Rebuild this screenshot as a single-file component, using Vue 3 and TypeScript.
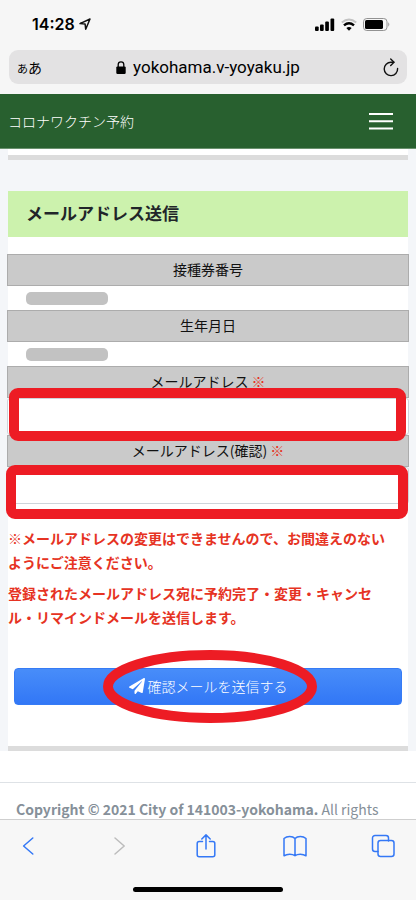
<script setup lang="ts">
import { ref } from 'vue'

const email = ref('')
const emailConfirm = ref('')
const notices: string[] = [
  '※メールアドレスの変更はできませんので、お間違えのないようにご注意ください。',
  '登録されたメールアドレス宛に予約完了・変更・キャンセル・リマインドメールを送信します。',
]
</script>

<template>
  <div class="phone">
    <header class="browser">
      <div class="status">
        <div class="clock">
          <span>14:28</span>
          <svg width="12" height="12" viewBox="0 0 12 12"><path d="M1 5.600 11 1 6.700 11.200 6.100 6Z" fill="none" stroke="#111" stroke-width="1.500" stroke-linejoin="round" /></svg>
        </div>
        <div class="signals">
          <svg width="20" height="13" viewBox="0 0 20 13"><rect x="0" y="8.500" width="3.700" height="4.500" rx="1" /><rect x="5" y="6.500" width="3.700" height="6.500" rx="1" /><rect x="10.200" y="3.500" width="3.700" height="9.500" rx="1" /><rect x="15.500" y="0.500" width="3.700" height="12.500" rx="1" /></svg>
          <svg width="16" height="13" viewBox="0 0 16 13" fill="none"><path d="M.8 4.600Q8-1.600 15.200 4.600" stroke="#c3c3c3" stroke-width="2" /><path d="M3 7.400Q8 3.200 13 7.400" stroke="#000" stroke-width="2.500" /><path d="M5.300 10Q8 7.800 10.700 10L8 12.700Z" fill="#000" /></svg>
          <svg width="28" height="13" viewBox="0 0 28 13"><rect x=".5" y=".5" width="23.500" height="12" rx="3.300" fill="none" stroke="#929292" /><rect x="2" y="2" width="18" height="9" rx="1.600" /><path d="M25.300 4.300q2 2.200 0 4.400z" fill="#929292" /></svg>
        </div>
      </div>
      <div class="address">
        <button class="plain text-size" type="button" aria-label="表示メニュー"><small>あ</small>あ</button>
        <div class="url">
          <svg width="10" height="13" viewBox="0 0 10 13"><path d="M2.200 6V3.600a2.800 2.800 0 0 1 5.600 0V6" fill="none" stroke="#000" stroke-width="1.300" /><rect x=".3" y="5.400" width="9.400" height="7.600" rx="1.200" /></svg>
          <span>yokohama.v-yoyaku.jp</span>
        </div>
        <button class="plain reload" type="button" aria-label="再読み込み">
          <svg width="16" height="19" viewBox="0 0 16 19" fill="none" stroke="#111" stroke-width="1.400" stroke-linecap="round" stroke-linejoin="round"><path d="M14.600 10.500A6.700 6.700 0 1 1 8 4.200h2.800" /><path d="m7.700 1 3.300 3.200-3.300 3.300" /></svg>
        </button>
      </div>
    </header>

    <nav class="navbar">
      <a class="brand" href="#">コロナワクチン予約</a>
      <button class="plain" type="button" aria-label="メニュー">
        <svg width="24" height="18" viewBox="0 0 24 18" stroke="#fff" stroke-width="2"><path d="M0 2h24M0 9.300h24M0 16.500h24" /></svg>
      </button>
    </nav>

    <main class="content">
      <div class="page">
        <div class="card-end"></div>
        <form class="card" @submit.prevent>
          <h1>メールアドレス送信</h1>
          <div class="fields">
            <div class="label">接種券番号</div>
            <div class="value"><span class="mask"></span></div>
            <div class="label">生年月日</div>
            <div class="value"><span class="mask"></span></div>
            <label class="label" for="email">メールアドレス <span class="required">※</span></label>
            <div class="entry first">
              <input id="email" v-model="email" type="email">
              <span class="highlight"></span>
            </div>
            <label class="label" for="email-confirm">メールアドレス(確認) <span class="required">※</span></label>
            <div class="entry second">
              <input id="email-confirm" v-model="emailConfirm" type="email">
              <span class="highlight"></span>
            </div>
          </div>
          <div class="notices">
            <p v-for="notice in notices" :key="notice">{{ notice }}</p>
          </div>
          <div class="action">
            <button class="submit" type="submit">
              <svg width="16" height="16" viewBox="0 0 512 512" fill="#fff"><path d="M476 3.200 12.500 270.600c-18.100 10.400-15.800 35.600 2.200 43.200L121 358.400l287.300-253.200c5.500-4.900 13.300 2.600 8.600 8.300L176 407v80.500c0 23.600 28.500 32.900 42.500 15.800L282 426l124.600 52.200c14.200 6 30.400-2.900 33-18.200l72-432C515 7.800 493.300-6.800 476 3.200z" /></svg>
              <span>確認メールを送信する</span>
            </button>
            <svg class="ring" viewBox="0 0 214 73" fill="none"><ellipse cx="107" cy="36.500" rx="102" ry="31.500" stroke="#ed1c24" stroke-width="10" /></svg>
          </div>
        </form>
      </div>
      <footer class="footer"><strong>Copyright © 2021 City of 141003-yokohama.</strong> All rights</footer>
    </main>

    <div class="toolbar">
      <div class="tools">
        <button class="plain" type="button" aria-label="戻る"><svg width="24" height="24" viewBox="0 0 24 24"><path d="M15.800 4 6.600 12l9.200 8" /></svg></button>
        <button class="plain off" type="button" aria-label="進む"><svg width="24" height="24" viewBox="0 0 24 24"><path d="m9 4 9.200 8L9 20" /></svg></button>
        <button class="plain" type="button" aria-label="共有"><svg width="24" height="24" viewBox="0 0 24 24"><path d="M8.500 7.500H5.200a2 2 0 0 0-2 2v11.300a2 2 0 0 0 2 2h13.600a2 2 0 0 0 2-2V9.500a2 2 0 0 0-2-2h-3.300M12 15V1M7.800 5 12 .900 16.200 5" /></svg></button>
        <button class="plain" type="button" aria-label="ブックマーク"><svg width="24" height="24" viewBox="0 0 24 24"><path d="M12 4.500v17.300M12 4.500C9.500 1.700 4 1.700 1 4.500v17.300c3-2.200 8.500-2.200 11 0 2.500-2.200 8-2.200 11 0V4.500c-3-2.800-8.500-2.800-11 0Z" /></svg></button>
        <button class="plain" type="button" aria-label="タブ"><svg width="24" height="24" viewBox="0 0 24 24"><path d="M7 17.500H4a2.500 2.500 0 0 1-2.500-2.500V4A2.500 2.500 0 0 1 4 1.500h11A2.500 2.500 0 0 1 17.500 4v3" /><rect x="7" y="6.500" width="16" height="16" rx="2.500" /></svg></button>
      </div>
      <div class="home"></div>
    </div>
  </div>
</template>

<style>
body {
  margin: 0;
}
</style>

<style scoped>
* {
  box-sizing: border-box;
}

.phone {
  display: flex;
  flex-direction: column;
  height: 100vh;
  overflow: hidden;
  background: #fff;
  color: #212529;
  font: 14px/24px "Noto Sans CJK JP", sans-serif;
}

svg {
  display: block;
  flex: none;
}

.plain {
  display: block;
  padding: 0;
  border: 0;
  background: none;
  color: inherit;
  font: inherit;
}

.browser {
  flex: none;
  padding: 14px 9px 10px;
  background: #f6f6f6;
  color: #000;
}

.status {
  display: flex;
  justify-content: space-between;
  height: 20px;
  margin-bottom: 16px;
  padding: 0 16px 0 23px;
}

.clock {
  display: flex;
  align-items: center;
  gap: 4px;
  font: 600 16px/20px Inter, sans-serif;
}

.signals {
  display: flex;
  align-items: center;
  gap: 6px;
}

.address {
  display: grid;
  grid-template-columns: 1fr auto 1fr;
  align-items: center;
  height: 34px;
  padding: 0 8px;
  border-radius: 9px;
  background: #e3e2e3;
}

.text-size {
  justify-self: start;
}

.text-size small {
  font-size: 11px;
}

.url {
  display: flex;
  align-items: center;
  gap: 7px;
  font: 17px/24px Roboto, sans-serif;
}

.reload {
  justify-self: end;
}

.navbar {
  display: flex;
  flex: none;
  align-items: center;
  justify-content: space-between;
  height: 55px;
  padding: 0 23px 0 8px;
  border-bottom: 1px solid #69916e;
  background: #28602f;
}

.brand {
  color: #fff;
  font-weight: 300;
  text-decoration: none;
}

.content {
  flex: 1;
  min-height: 0;
  overflow: hidden;
}

.page {
  padding: 0 8px;
  background: #f4f6f9;
}

.card-end {
  height: 11px;
  margin-bottom: 31px;
  border-bottom: 5px solid #dcdcdc;
  background: #fff;
}

.card {
  border-bottom: 5px solid #dcdcdc;
  background: #fff;
}

h1 {
  margin: 0 0 17px;
  padding: 10px 18px 12px;
  background: #ccf2ad;
  font-size: 17px;
  font-weight: 700;
  line-height: 24px;
}

.fields {
  margin: 0 -1px;
}

.label {
  display: block;
  padding: 2px 0 4px;
  border: 1px solid #acacac;
  background: #cacaca;
  color: #111;
  text-align: center;
}

.required {
  color: #e63323;
}

.value {
  display: flex;
  align-items: center;
  height: 24px;
  padding: 0 19px;
}

.mask {
  width: 82px;
  height: 13px;
  border-radius: 5px;
  background: #c2c2c2;
}

.entry {
  position: relative;
}

.entry input {
  display: block;
  width: 100%;
  height: 37px;
  padding: 6px 12px;
  border: 1px solid #ced4da;
  border-radius: 3px;
  outline: 0;
  background: #fff;
  font: inherit;
}

.highlight {
  position: absolute;
  border: 10px solid #ed1c24;
  border-radius: 9px;
  pointer-events: none;
}

.first .highlight {
  inset: -10px 3px -6px 2px;
}

.second {
  z-index: 1;
}

.second .highlight {
  inset: -2px 1px -15px -1px;
}

.notices {
  padding: 22px 12px 0 0;
  color: #e63323;
  font-weight: 700;
}

.notices p {
  margin: 0 0 7px;
}

.action {
  position: relative;
  padding: 32px 6px 41px;
}

.submit {
  display: flex;
  align-items: center;
  justify-content: center;
  gap: 3px;
  width: 100%;
  height: 37px;
  padding: 0 0 2px;
  border: 1px solid #367bf5;
  border-radius: 4px;
  background: linear-gradient(#488df9, #3277f6);
  color: #fff;
  font: inherit;
  font-weight: 300;
}

.ring {
  position: absolute;
  top: 14px;
  left: 50%;
  width: 214px;
  height: 73px;
  margin-left: -105px;
  pointer-events: none;
}

.footer {
  margin-top: 31px;
  padding: 14px 16px;
  border-top: 1px solid #dee2e6;
  color: #869099;
  white-space: nowrap;
}

.toolbar {
  flex: none;
  padding-bottom: 8px;
  border-top: 1px solid #cfcfcf;
  background: #f7f7f7;
}

.tools {
  display: flex;
  justify-content: space-between;
  height: 67px;
  padding: 14px 21px 0 17px;
}

.tools button {
  height: 24px;
}

.tools path,
.tools rect {
  fill: none;
  stroke: #3478f6;
  stroke-width: 1.5;
  stroke-linecap: round;
  stroke-linejoin: round;
}

.tools .off path {
  stroke: #bcbcbc;
}

.home {
  width: 36%;
  height: 5px;
  margin: 0 auto;
  border-radius: 3px;
  background: #000;
}
</style>
